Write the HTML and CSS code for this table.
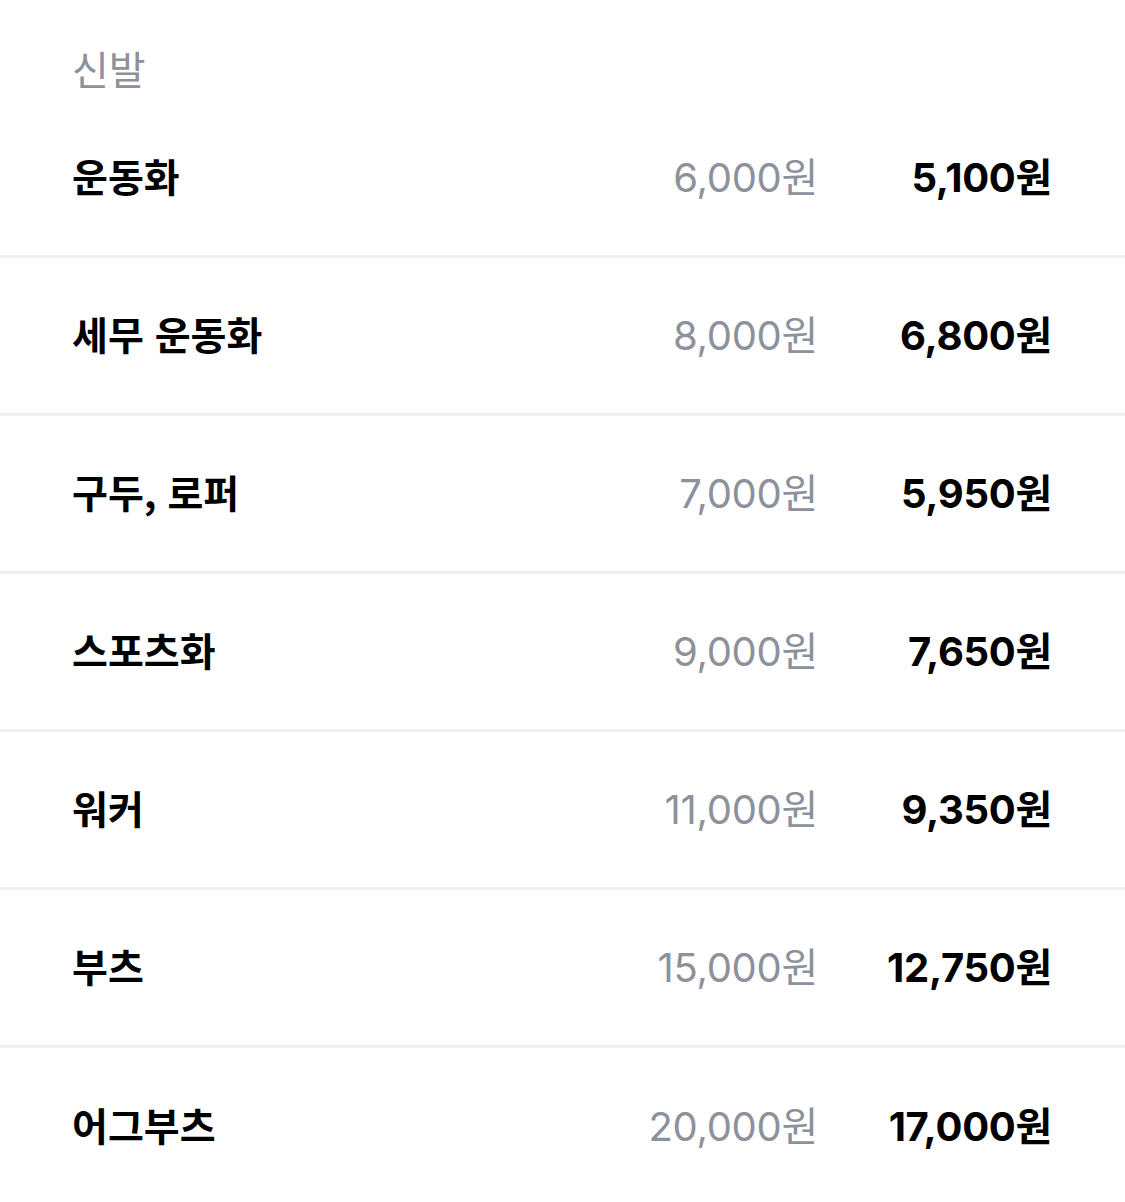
FILE: index.html
```html
<!DOCTYPE html>
<html lang="ko">
<head>
<meta charset="utf-8">
<title>신발</title>
<link rel="stylesheet" href="styles.css">
</head>
<body>
<section class="price-list">
  <h2 class="section-title">신발</h2>
  <ul class="rows">
    <li class="row"><span class="name">운동화</span><span class="orig">6,000원</span><span class="sale">5,100원</span></li>
    <li class="row"><span class="name">세무 운동화</span><span class="orig">8,000원</span><span class="sale">6,800원</span></li>
    <li class="row"><span class="name">구두, 로퍼</span><span class="orig">7,000원</span><span class="sale">5,950원</span></li>
    <li class="row"><span class="name">스포츠화</span><span class="orig">9,000원</span><span class="sale">7,650원</span></li>
    <li class="row"><span class="name">워커</span><span class="orig">11,000원</span><span class="sale">9,350원</span></li>
    <li class="row"><span class="name">부츠</span><span class="orig">15,000원</span><span class="sale">12,750원</span></li>
    <li class="row"><span class="name">어그부츠</span><span class="orig">20,000원</span><span class="sale">17,000원</span></li>
  </ul>
</section>
</body>
</html>
```
FILE: styles.css
```css
html, body {
  margin: 0;
  padding: 0;
  background: #ffffff;
}
body {
  font-family: "Inter", "Noto Sans CJK KR", sans-serif;
  color: #000000;
}
.price-list {
  width: 1125px;
}
.section-title {
  margin: 0;
  height: 100px;
  box-sizing: border-box;
  padding: 40px 72px 0;
  font-family: "Noto Sans CJK KR", sans-serif;
  font-weight: 400;
  font-size: 40px;
  line-height: 56px;
  color: #8c919b;
}
.rows {
  list-style: none;
  margin: 0;
  padding: 0;
}
.row {
  display: grid;
  grid-template-columns: 1fr auto 234px;
  align-items: center;
  box-sizing: border-box;
  height: 158px;
  padding: 0 73px 6px 72px;
  border-bottom: 3px solid #eff0f2;
}
.row:last-child {
  border-bottom: none;
}
.name {
  font-family: "Noto Sans CJK KR", sans-serif;
  font-weight: 700;
  font-size: 39px;
  line-height: 56px;
  color: #000;
}
.orig,
.sale {
  font-size: 40px;
  line-height: 56px;
  padding-top: 6px;
  text-align: right;
  letter-spacing: -0.3px;
}
.orig {
  font-weight: 400;
  color: #8c919b;
}
.sale {
  font-weight: 700;
  color: #000;
}
```
